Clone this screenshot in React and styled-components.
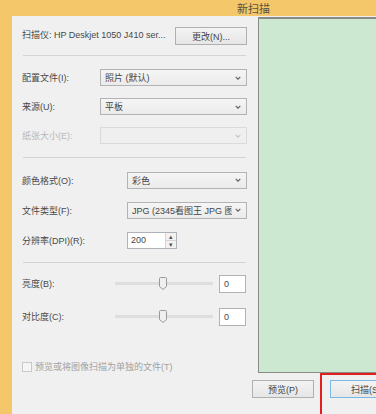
import React from 'react'
import styled, { createGlobalStyle } from 'styled-components'

const GlobalStyle = createGlobalStyle`
  body { margin: 0; background: #f0f0f0; }
  * { box-sizing: border-box; }
`

function Chevron({ disabled }) {
  return (
    <svg width="6" height="4" viewBox="0 0 6 4">
      <path d="M0.7 0.8 L3 3.2 L5.3 0.8" fill="none" stroke={disabled ? '#c8c8c8' : '#666'} strokeWidth="1.2" />
    </svg>
  )
}

function Thumb() {
  return (
    <svg width="8" height="13" viewBox="0 0 8 13">
      <path d="M1.5 0.5 H6.5 Q7.5 0.5 7.5 1.5 V9.5 L4 12.5 L0.5 9.5 V1.5 Q0.5 0.5 1.5 0.5 Z" fill="#efefef" stroke="#999" />
    </svg>
  )
}

function App() {
  return (
    <>
      <GlobalStyle />
      <Window>
        <TitleBar>新扫描</TitleBar>
        <Frame>
          <Client>
            <Main>
              <Settings>
                <ScannerRow>
                  <ScannerName>扫描仪: HP Deskjet 1050 J410 ser...</ScannerName>
                  <Button width={72} height={18}>更改(N)...</Button>
                </ScannerRow>
                <Separator />
                <Group top={7} bottom={7}>
                  <Row height={29}>
                    <Label width={78}>配置文件(I):</Label>
                    <Select><span>照片 (默认)</span><Chevron /></Select>
                  </Row>
                  <Row height={29}>
                    <Label width={78}>来源(U):</Label>
                    <Select><span>平板</span><Chevron /></Select>
                  </Row>
                  <Row height={29}>
                    <Label width={78} disabled>纸张大小(E):</Label>
                    <Select disabled><span></span><Chevron disabled /></Select>
                  </Row>
                </Group>
                <Separator />
                <Group top={7} bottom={7}>
                  <Row height={30}>
                    <Label width={105}>颜色格式(O):</Label>
                    <Select><span>彩色</span><Chevron /></Select>
                  </Row>
                  <Row height={30}>
                    <Label width={105}>文件类型(F):</Label>
                    <Select><span>JPG (2345看图王 JPG 图片文件)</span><Chevron /></Select>
                  </Row>
                  <Row height={30}>
                    <Label width={105}>分辨率(DPI)(R):</Label>
                    <Spin>
                      <SpinValue>200</SpinValue>
                      <SpinButtons>
                        <SpinArrow>▴</SpinArrow>
                        <SpinArrow>▾</SpinArrow>
                      </SpinButtons>
                    </Spin>
                  </Row>
                </Group>
                <Separator />
                <Group top={4} bottom={0}>
                  <Row height={33}>
                    <Label width={93}>亮度(B):</Label>
                    <Slider>
                      <Track />
                      <ThumbWrap style={{ left: '45%' }}><Thumb /></ThumbWrap>
                    </Slider>
                    <ValueBox>0</ValueBox>
                  </Row>
                  <Row height={33}>
                    <Label width={93}>对比度(C):</Label>
                    <Slider>
                      <Track />
                      <ThumbWrap style={{ left: '45%' }}><Thumb /></ThumbWrap>
                    </Slider>
                    <ValueBox>0</ValueBox>
                  </Row>
                </Group>
                <CheckRow>
                  <CheckBox />
                  <span>预览或将图像扫描为单独的文件(T)</span>
                </CheckRow>
              </Settings>
              <Preview />
            </Main>
            <Footer>
              <Button width={62} height={18}>预览(P)</Button>
              <Highlight>
                <Button width={72} height={18} primary>扫描(S)</Button>
              </Highlight>
            </Footer>
          </Client>
        </Frame>
      </Window>
    </>
  )
}

export default App

const Window = styled.div`
    width: 376px;
    height: 414px;
    overflow: hidden;
    background: #f3c76a;
    display: flex;
    flex-direction: column;
    font-family: "Liberation Sans", "Noto Sans CJK SC", sans-serif;
    font-size: 9px;
    color: #484848;
`

const TitleBar = styled.div`
    height: 16px;
    flex-shrink: 0;
    display: flex;
    align-items: center;
    padding-left: 237px;
    font-size: 11px;
    color: #5a5040;
`

const Frame = styled.div`
    flex: 1;
    display: flex;
    padding-left: 12px;
    min-height: 0;
`

const Client = styled.div`
    flex: 1;
    background: #f0f0f0;
    display: flex;
    flex-direction: column;
    overflow: hidden;
`

const Main = styled.div`
    height: 357px;
    display: flex;
`

const Settings = styled.div`
    width: 246px;
    flex-shrink: 0;
    padding: 0 11px 0 10px;
    display: flex;
    flex-direction: column;
`

const ScannerRow = styled.div`
    height: 41px;
    display: flex;
    align-items: center;
    justify-content: space-between;
    padding-top: 1px;
`

const ScannerName = styled.div`
    white-space: nowrap;
    margin-top: -3px;
`

const Separator = styled.div`
    height: 1px;
    margin: 0 1px;
    background: #d4d4d4;
`

const Group = styled.div`
    display: flex;
    flex-direction: column;
    padding-top: ${p => p.top}px;
    padding-bottom: ${p => p.bottom}px;
`

const Row = styled.div`
    height: ${p => p.height}px;
    display: flex;
    align-items: center;
`

const Label = styled.div`
    width: ${p => p.width}px;
    flex-shrink: 0;
    white-space: nowrap;
    color: ${p => (p.disabled ? '#b8b8b8' : '#484848')};
`

const Select = styled.div`
    flex: 1;
    min-width: 0;
    height: 17px;
    display: flex;
    align-items: center;
    justify-content: space-between;
    padding: 0 5px 0 4px;
    border: 1px solid ${p => (p.disabled ? '#dadada' : '#b3b3b3')};
    background: ${p => (p.disabled ? '#efefef' : 'linear-gradient(#f5f5f5, #ebebeb)')};
    color: #444;

    span {
        overflow: hidden;
        white-space: nowrap;
        flex: 1;
        margin-right: 3px;
    }
    svg {
        flex-shrink: 0;
    }
`

const Button = styled.div`
    width: ${p => p.width}px;
    height: ${p => p.height}px;
    flex-shrink: 0;
    display: flex;
    align-items: center;
    justify-content: center;
    border: 1px solid ${p => (p.primary ? '#78b9ea' : '#b0b0b0')};
    background: linear-gradient(#f3f3f3, #e6e6e6);
    color: #444;
    white-space: nowrap;
`

const Spin = styled.div`
    width: 50px;
    height: 17px;
    display: flex;
    border: 1px solid #b0b2b8;
    background: #fff;
`

const SpinValue = styled.div`
    flex: 1;
    display: flex;
    align-items: center;
    padding-left: 3px;
`

const SpinButtons = styled.div`
    width: 11px;
    display: flex;
    flex-direction: column;
    border-left: 1px solid #d4d4d4;
`

const SpinArrow = styled.div`
    flex: 1;
    display: flex;
    align-items: center;
    justify-content: center;
    font-size: 7px;
    line-height: 1;
    color: #555;
    background: #f2f2f2;
    & + & {
        border-top: 1px solid #d4d4d4;
    }
`

const Slider = styled.div`
    position: relative;
    width: 98px;
    height: 14px;
    display: flex;
    align-items: center;
    margin-right: 6px;
`

const Track = styled.div`
    width: 100%;
    height: 3px;
    background: #dedede;
    border-radius: 1px;
`

const ThumbWrap = styled.div`
    position: absolute;
    top: 0;
    display: flex;
`

const ValueBox = styled.div`
    width: 27px;
    height: 18px;
    display: flex;
    align-items: center;
    padding-left: 4px;
    border: 1px solid #b0b2b8;
    background: #fff;
`

const CheckRow = styled.div`
    margin-top: 27px;
    display: flex;
    align-items: center;
    gap: 3px;
    color: #a2a2a2;
    white-space: nowrap;
`

const CheckBox = styled.div`
    width: 10px;
    height: 10px;
    border: 1px solid #c9c9c9;
    background: #f5f5f5;
`

const Preview = styled.div`
    flex: 1;
    margin-top: 1px;
    background: #cde8d0;
    border: 1px solid #8a8a86;
    border-top-width: 2px;
    border-right: none;
`

const Footer = styled.div`
    flex: 1;
    display: flex;
    align-items: flex-start;
    padding: 7px 0 0 240px;
`

const Highlight = styled.div`
    margin: -7px 0 0 6px;
    padding: 5px 0 0 8px;
    height: 50px;
    width: 90px;
    flex-shrink: 0;
    border: 2px solid #e21f1f;
`
